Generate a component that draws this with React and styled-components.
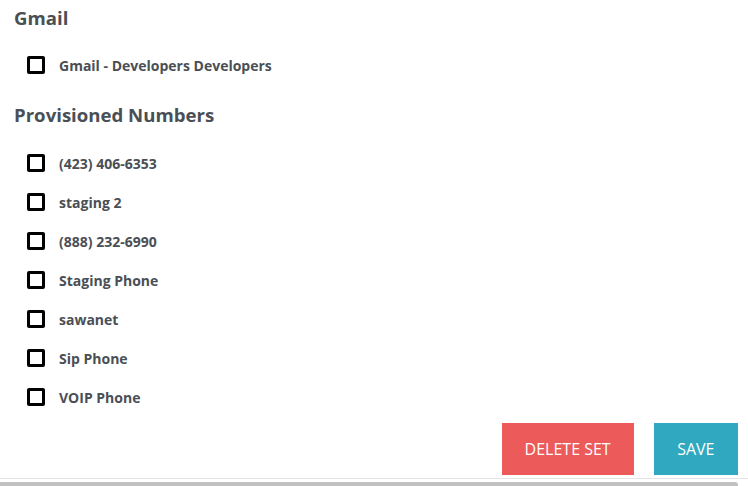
import React from "react";
import styled, { createGlobalStyle } from "styled-components";

const GlobalStyle = createGlobalStyle`
  html, body {
    margin: 0;
    padding: 0;
    background: #fff;
    font-family: "Open Sans", "Liberation Sans", sans-serif;
    color: #4a4f55;
  }
`;

const Page = styled.div`
  width: 748px;
  height: 486px;
  overflow: hidden;
  display: flex;
  flex-direction: column;
`;

const Content = styled.div`
  padding: 6px 0 0 14px;
`;

const SectionTitle = styled.h2`
  font-size: 18.6px;
  font-weight: 700;
  line-height: 24px;
  margin: 0 0 ${(p) => p.gap || 0}px;
`;

const List = styled.div`
  display: flex;
  flex-direction: column;
  gap: 19px;
  padding-left: 13px;
  margin-bottom: ${(p) => p.after || 0}px;
`;

const Row = styled.label`
  display: flex;
  align-items: center;
  gap: 14px;
  height: 20px;
  font-size: 14px;
  font-weight: 700;
`;

const Box = styled.span`
  width: 12px;
  height: 12px;
  border: 3px solid #000;
  border-radius: 2px;
  flex-shrink: 0;
`;

const Actions = styled.div`
  display: flex;
  justify-content: flex-end;
  gap: 20px;
  padding-right: 10px;
`;

const Button = styled.button`
  height: 52px;
  padding: 0 ${(p) => p.pad}px;
  border: none;
  border-radius: 0;
  background: ${(p) => p.bg};
  color: #fff;
  font-family: "Open Sans", "Liberation Sans", sans-serif;
  font-size: 16px;
  font-weight: 400;
  text-transform: uppercase;
  cursor: pointer;
`;

const Footer = styled.div`
  margin-top: 3px;
  border-top: 1px solid #e4e4e4;
  padding-top: 3px;
`;

const Track = styled.div`
  width: 738px;
  height: 5px;
  background: #c1c1c1;
  border-radius: 0 3px 0 0;
`;

const gmail = ["Gmail - Developers Developers"];
const numbers = [
  "(423) 406-6353",
  "staging 2",
  "(888) 232-6990",
  "Staging Phone",
  "sawanet",
  "Sip Phone",
  "VOIP Phone",
];

const Item = ({ label }) => (
  <Row>
    <Box />
    {label}
  </Row>
);

export default function App() {
  return (
    <Page>
      <GlobalStyle />
      <Content>
        <SectionTitle gap={25}>Gmail</SectionTitle>
        <List after={28}>
          {gmail.map((g) => (
            <Item key={g} label={g} />
          ))}
        </List>
        <SectionTitle gap={26}>Provisioned Numbers</SectionTitle>
        <List after={16}>
          {numbers.map((n) => (
            <Item key={n} label={n} />
          ))}
        </List>
        <Actions>
          <Button bg="#ec5a59" pad={23}>Delete Set</Button>
          <Button bg="#2fa8c0" pad={23.5}>Save</Button>
        </Actions>
      </Content>
      <Footer>
        <Track />
      </Footer>
    </Page>
  );
}
